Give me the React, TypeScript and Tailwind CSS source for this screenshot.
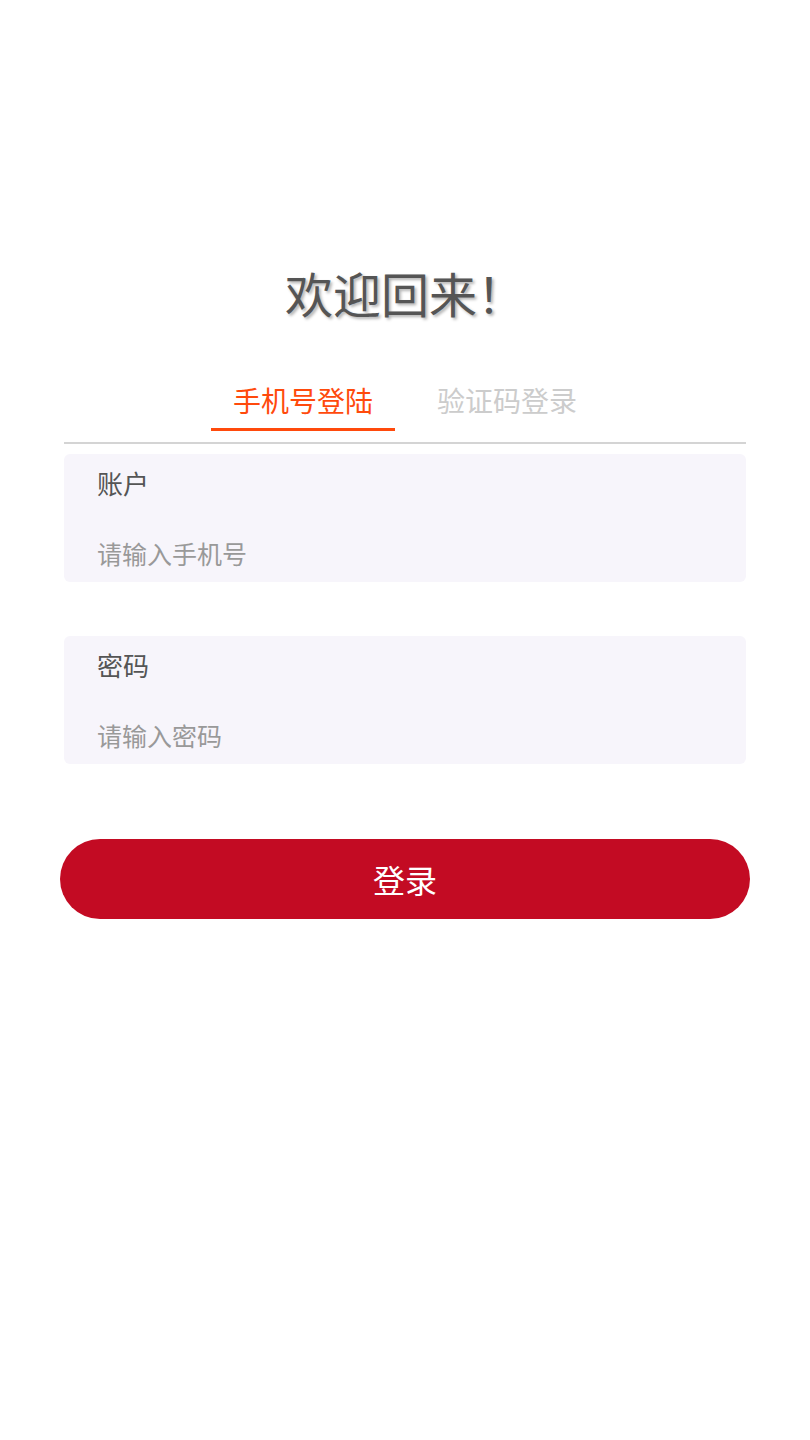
import { useState } from 'react';

export default function App() {
  const [tab, setTab] = useState<'phone' | 'code'>('phone');

  return (
    <div className="flex min-h-[1440px] w-full flex-col bg-white pt-[262px] font-['Noto_Sans_CJK_SC',sans-serif]">
      <h1 className="h-[60px] text-center text-[48px] leading-[60px] text-[#555555] [text-shadow:2px_2px_3px_rgba(0,0,0,0.3)]">
        欢迎回来！
      </h1>

      <div className="mt-[58px] flex justify-center gap-[20px]">
        <button
          onClick={() => setTab('phone')}
          className="flex w-[184px] flex-col items-center"
        >
          <span
            className={`h-[40px] text-[28px] leading-[40px] ${
              tab === 'phone' ? 'text-[#ff4a0c]' : 'text-[#cccccc]'
            }`}
          >
            手机号登陆
          </span>
          <span
            className={`mt-[8px] h-[3px] w-full ${
              tab === 'phone' ? 'bg-[#ff4a0c]' : 'bg-transparent'
            }`}
          />
        </button>
        <button
          onClick={() => setTab('code')}
          className="flex w-[184px] flex-col items-center"
        >
          <span
            className={`h-[40px] text-[28px] leading-[40px] ${
              tab === 'code' ? 'text-[#ff4a0c]' : 'text-[#cccccc]'
            }`}
          >
            验证码登录
          </span>
          <span
            className={`mt-[8px] h-[3px] w-full ${
              tab === 'code' ? 'bg-[#ff4a0c]' : 'bg-transparent'
            }`}
          />
        </button>
      </div>

      <div className="mx-[64px] mt-[11px] h-[2px] bg-[#d4d4d4]" />

      <div className="mx-[64px] mt-[10px] flex flex-col gap-[54px]">
        <div className="h-[128px] rounded-[6px] bg-[#f7f5fb] pl-[33px] pt-[11px]">
          <div className="h-[36px] text-[26px] leading-[36px] text-[#555555]">账户</div>
          <div className="mt-[34px] h-[36px] text-[25px] leading-[36px] text-[#999999]">
            请输入手机号
          </div>
        </div>
        <div className="h-[128px] rounded-[6px] bg-[#f7f5fb] pl-[33px] pt-[11px]">
          <div className="h-[36px] text-[26px] leading-[36px] text-[#555555]">密码</div>
          <div className="mt-[34px] h-[36px] text-[25px] leading-[36px] text-[#999999]">
            请输入密码
          </div>
        </div>
      </div>

      <button className="mx-auto mt-[75px] flex h-[80px] w-[690px] items-center justify-center rounded-[40px] bg-[#c30b23] text-[32px] text-white">
        登录
      </button>
    </div>
  );
}
